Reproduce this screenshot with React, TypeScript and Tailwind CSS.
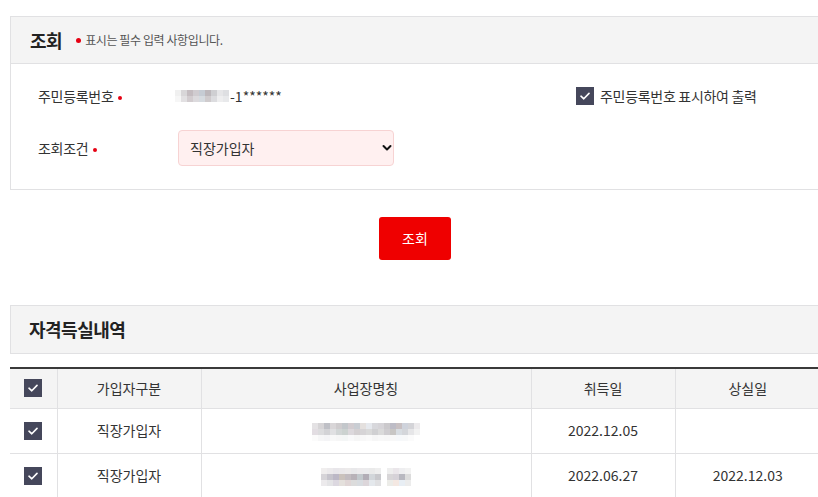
const font = "font-['Noto_Sans_CJK_KR','Noto_Sans',sans-serif]";

const rrnBlur = [
  ["#f0f0f0", "#d8d6d8", "#c4bcc0", "#d0ccd0", "#c6ccd4", "#bdb8bc", "#cfcfd2", "#e6e6e8", "#dedfe2"],
  ["#f6f6f6", "#e2e0e2", "#d2cccf", "#dcdadd", "#d6dbe0", "#cfcbcd", "#dcdcdf", "#eeeeef", "#e8e9eb"],
];

const companyA = [
  ["#e4e2e4", "#d6d4d6", "#bfc0c6", "#d9d6d8", "#cfccce", "#c3c7cb", "#d2ccd0", "#c9cdd3", "#e4e0de", "#e6e9ee", "#d8d8dc", "#d6d4d8", "#cbc9cc", "#bdbcc6", "#c8c0c2", "#cfd3dc", "#d4d4d8", "#eceaec"],
  ["#e2dde2", "#dcdcde", "#d3d3d6", "#e0e0e2", "#d2d6d6", "#ccd2d0", "#dcd8dc", "#d4d0d2", "#d6d4d6", "#dadada", "#d0d0d2", "#dadada", "#cfcdd0", "#c8c6c4", "#d8dde2", "#d4d6da", "#e6e6e8", "#f2f2f2"],
  ["#fbfbfb", "#f6f6f7", "#f4f4f6", "#f8f8f8", "#f6f6f6", "#f4f6f6", "#f9f9fa", "#f6f6f6", "#f8f8f8", "#fafafa", "#f6f6f6", "#f8f8f8", "#f7f7f7", "#f8f8f8", "#f6f8fa", "#f7f8f9", "#fbfbfb", "#ffffff"],
];

const companyB1 = [
  ["#f0eeee", "#eceaec", "#e8e6ea", "#eae8ea", "#eceaea", "#e8e8ea", "#eceaec", "#ebebed", "#eaeaea", "#eeeeee"],
  ["#d6d4d8", "#c6c4cc", "#bcb8c6", "#cac2bc", "#c2bcc0", "#b8b2b8", "#c2c8cc", "#b2adb6", "#d2d6da", "#c8c8cc"],
  ["#eceaec", "#e4e4e6", "#dcd8e0", "#e4e0dc", "#e0d6d6", "#dcdcdc", "#d8dce0", "#dcd6da", "#e4e8ec", "#e0e0e2"],
];

const companyB2 = [
  ["#eeeeee", "#eae6ea", "#eeeef0", "#f2f2f2"],
  ["#d8d6d8", "#d6d2d8", "#b8b8c0", "#dcdcdc"],
  ["#ecece8", "#f4e8e2", "#e8eef4", "#ececec"],
];

function Mosaic({ rows, size = 6 }: { rows: string[][]; size?: number }) {
  return (
    <div className="inline-flex flex-col align-middle">
      {rows.map((row, i) => (
        <div key={i} className="flex">
          {row.map((c, j) => (
            <span key={j} style={{ backgroundColor: c, width: size, height: size }} />
          ))}
        </div>
      ))}
    </div>
  );
}

function Check() {
  return (
    <span className="flex h-[18px] w-[18px] items-center justify-center bg-[#45475b]">
      <svg width="10" height="8" viewBox="0 0 10 8" fill="none">
        <path d="M1 4.2L3.8 6.8L9 1.4" stroke="#ffffff" strokeWidth="1.6" strokeLinecap="round" strokeLinejoin="round" />
      </svg>
    </span>
  );
}

function Dot() {
  return <span className="ml-[5px] inline-block h-[4px] w-[4px] rounded-full bg-[#e60012] align-middle" />;
}

const rows = [
  { type: "직장가입자", name: "a", start: "2022.12.05", end: "" },
  { type: "직장가입자", name: "b", start: "2022.06.27", end: "2022.12.03" },
];

export default function App() {
  return (
    <div className={`w-[818px] h-[497px] overflow-hidden bg-white text-[#333] ${font}`}>
      <div className="ml-[10px] w-[810px] pt-[16px]">
        {/* 조회 */}
        <section className="border border-[#e1e1e3]">
          <div className="flex h-[47px] items-center border-b border-[#e1e1e3] bg-[#f4f4f4] pl-[19px]">
            <h2 className="text-[18px] font-bold tracking-[-0.5px] text-[#222]">조회</h2>
            <span className="ml-[14px] inline-block h-[5px] w-[5px] rounded-full bg-[#e60012]" />
            <span className="ml-[4px] text-[12px] tracking-[-0.4px] text-[#555]">표시는 필수 입력 사항입니다.</span>
          </div>
          <div className="pb-[23px] pt-[21px]">
            <div className="flex h-[22px] items-center">
              <div className="w-[164px] pl-[27px] text-[14px] tracking-[-0.3px]">
                주민등록번호<Dot />
              </div>
              <div className="flex w-[401px] items-center text-[14px]">
                <Mosaic rows={rrnBlur} />
                <span className="ml-[1px]">-1******</span>
              </div>
              <label className="flex items-center text-[14px] tracking-[-0.3px]">
                <Check />
                <span className="ml-[6px]">주민등록번호 표시하여 출력</span>
              </label>
            </div>
            <div className="mt-[23px] flex items-center">
              <div className="w-[167px] pl-[27px] text-[14px] tracking-[-0.3px]">
                조회조건<Dot />
              </div>
              <div className="relative h-[36px] w-[216px]">
                <select
                  defaultValue="직장가입자"
                  className="h-full w-full appearance-none rounded-[4px] border border-[#f7d3d3] bg-[#fff0f0] pl-[11px] text-[14px] text-[#333] outline-none"
                >
                  <option>직장가입자</option>
                  <option>지역가입자</option>
                </select>
                <svg
                  className="pointer-events-none absolute right-[2px] top-[14px]"
                  width="10"
                  height="8"
                  viewBox="0 0 10 8"
                  fill="none"
                >
                  <path d="M1.5 2L5 5.5L8.5 2" stroke="#111" strokeWidth="2" strokeLinecap="round" strokeLinejoin="round" />
                </svg>
              </div>
            </div>
          </div>
        </section>

        <div className="flex justify-center pt-[27px]">
          <button className="h-[43px] w-[72px] rounded-[3px] bg-[#ef0000] text-[14px] text-white">조회</button>
        </div>

        {/* 자격득실내역 */}
        <section className="mt-[45px] flex h-[49px] items-center border border-[#e1e1e3] bg-[#f4f4f4] pl-[18px]">
          <h2 className="text-[18px] font-bold tracking-[-0.5px] text-[#222]">자격득실내역</h2>
        </section>

        <table className="mt-[13px] w-full table-fixed border-collapse border-t-2 border-[#3a3a3a] text-[14px]">
          <colgroup>
            <col className="w-[47px]" />
            <col className="w-[144px]" />
            <col className="w-[330px]" />
            <col className="w-[144px]" />
            <col />
          </colgroup>
          <thead>
            <tr className="h-[40px] bg-[#f4f4f4] font-normal">
              <th className="border-b border-r border-[#e1e1e3] font-normal">
                <div className="flex justify-center">
                  <Check />
                </div>
              </th>
              <th className="border-b border-r border-[#e1e1e3] font-normal">가입자구분</th>
              <th className="border-b border-r border-[#e1e1e3] font-normal">사업장명칭</th>
              <th className="border-b border-r border-[#e1e1e3] font-normal">취득일</th>
              <th className="border-b border-[#e1e1e3] font-normal">상실일</th>
            </tr>
          </thead>
          <tbody>
            {rows.map((r, i) => (
              <tr key={i} className="h-[45px]">
                <td className="border-b border-r border-[#e1e1e3]">
                  <div className="flex justify-center">
                    <Check />
                  </div>
                </td>
                <td className="border-b border-r border-[#e1e1e3] text-center">{r.type}</td>
                <td className="border-b border-r border-[#e1e1e3] text-center">
                  {r.name === "a" ? (
                    <div className="flex justify-center pt-[3px]">
                      <Mosaic rows={companyA} />
                    </div>
                  ) : (
                    <div className="flex justify-center gap-[6px] pt-[3px]">
                      <Mosaic rows={companyB1} />
                      <Mosaic rows={companyB2} />
                    </div>
                  )}
                </td>
                <td className="border-b border-r border-[#e1e1e3] text-center">{r.start}</td>
                <td className="border-b border-[#e1e1e3] text-center">{r.end}</td>
              </tr>
            ))}
          </tbody>
        </table>
      </div>
    </div>
  );
}
